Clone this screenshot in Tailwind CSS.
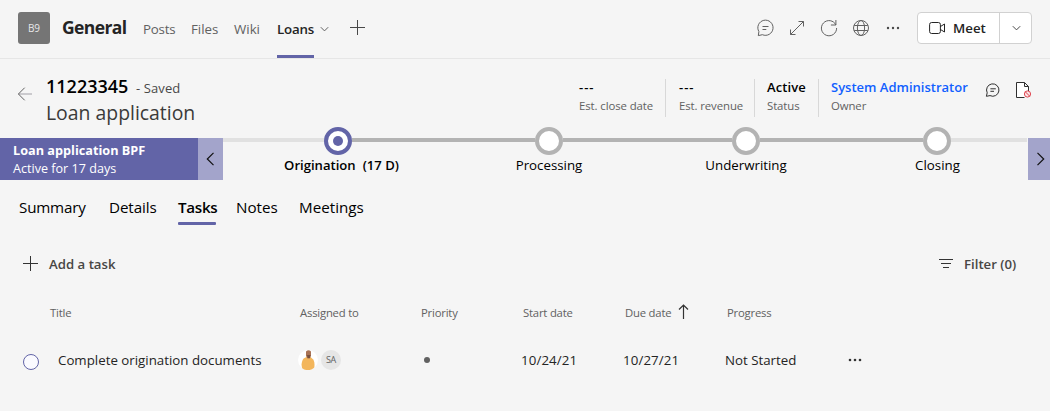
<!DOCTYPE html>
<html lang="en">
<head>
<meta charset="utf-8">
<title>General - Loans</title>
<script src="https://cdn.jsdelivr.net/npm/@tailwindcss/browser@4"></script>
</head>
<body class="w-[1050px] h-[411px] overflow-hidden bg-[#f5f5f5] font-['Open_Sans',sans-serif] text-[13.3px] leading-5 text-[#242424] whitespace-nowrap">

<!-- Channel header -->
<header class="flex h-[59px] border-b border-[#e6e6e6] pl-[18px] pr-[18px] text-[#616161]">
  <div class="mt-3 size-8 shrink-0 rounded-[3px] bg-[#757575] text-center text-[10px] leading-[33px] text-[#e8e8e8]">B9</div>
  <h1 class="ml-3 mt-[17px] w-[81px] shrink-0 text-[17.5px] font-bold tracking-[-0.6px] text-[#242424]">General</h1>
  <nav class="flex pt-[19px]">
    <a class="w-12 tracking-[-0.2px]">Posts</a>
    <a class="w-[43px]">Files</a>
    <a class="w-[43px]">Wiki</a>
    <a class="h-[39px] w-[37px] border-b-[3px] border-[#6264a7] font-semibold tracking-[-0.2px] text-[#242424]">Loans</a>
    <svg class="ml-[6px] mt-[6px]" width="9" height="8" fill="none" stroke="#616161"><path d="M.8 2.2 4.5 5.9 8.2 2.2"/></svg>
    <svg class="ml-[20px]" width="16" height="16" fill="none" stroke="#484848"><path d="M8.5 1v15M1 8.5h15"/></svg>
  </nav>
  <div class="ml-auto flex">
    <div class="flex gap-4 pt-[19px]">
      <svg width="18" height="18" fill="none" stroke="#616161" stroke-linejoin="round"><path d="M1.9 12.6A7.6 7.6 0 1 1 5.4 15.7L1.3 16.6Z M5.5 7.500h6M5.5 10.500h3.800"/></svg>
      <svg class="ml-[-2px]" width="16" height="18" fill="none" stroke="#616161"><path d="M1.5 15.5 14.5 2.5M9.5 2.5h5v5M1.5 10.5v5h5"/></svg>
      <svg class="ml-[-1px]" width="18" height="18" fill="none" stroke="#616161"><path d="M15.9 6A7.6 7.6 0 1 0 16.6 9M15.9 1v5h-5"/></svg>
      <svg class="ml-[-2px]" width="18" height="18" fill="none" stroke="#616161"><circle cx="9" cy="9" r="7.5"/><ellipse cx="9" cy="9" rx="3.6" ry="7.5"/><path d="M2.2 6.5h13.6M2.2 11.5h13.6"/></svg>
      <svg width="14" height="18" fill="#484848"><circle cx="2" cy="9" r="1.2"/><circle cx="7" cy="9" r="1.2"/><circle cx="12" cy="9" r="1.2"/></svg>
    </div>
    <div class="ml-[17px] mt-3 flex h-8 w-[115px] rounded-[4px] border border-[#d1d1d1] bg-white font-semibold text-[#242424]">
      <div class="flex w-[82px] border-r border-[#d1d1d1] pl-[11px] pt-[5px]">
        <svg class="mt-px" width="17" height="18" fill="none" stroke="#242424" stroke-linejoin="round"><rect x=".6" y="3.5" width="10.8" height="11" rx="2"/><path d="M11.5 7.5 15.5 5v8l-4-2.5"/></svg>
        <span class="ml-[7px]">Meet</span>
      </div>
      <svg class="ml-3 mt-[11px]" width="9" height="8" fill="none" stroke="#484848"><path d="M.8 2.2 4.5 5.9 8.2 2.2"/></svg>
    </div>
  </div>
</header>

<!-- Record header -->
<section class="flex h-[68px]">
  <svg class="ml-[17px] mt-[27px] shrink-0" width="16" height="16" fill="none"><path d="M1.5 8H15" stroke="#a19fa6"/><path d="M7.7 1.7 1.4 8l6.3 6.3" stroke="#616161"/></svg>
  <div class="ml-[13px] w-[533px] pt-[17px]">
    <div class="flex h-5"><span class="w-[90px] text-[18px] font-semibold text-black">11223345</span><span class="pt-[2px] text-[13px] tracking-[0.1px] text-[#484848]">- Saved</span></div>
    <h2 class="mt-[7px] text-[19.4px] font-medium text-[#3b3a39]">Loan application</h2>
  </div>
  <dl class="mt-5 flex h-[38px] text-[11.4px] tracking-[-0.1px] text-[#616161]">
    <div class="w-[87px] border-r border-[#d8d8d8]"><dt class="-mt-px text-[13px] leading-[18px] font-semibold tracking-[1px] text-black">---</dt><dd>Est. close date</dd></div>
    <div class="w-[89px] border-r border-[#d8d8d8] pl-[13px]"><dt class="-mt-px text-[13px] leading-[18px] font-semibold tracking-[1px] text-black">---</dt><dd>Est. revenue</dd></div>
    <div class="w-16 border-r border-[#d8d8d8] pl-3"><dt class="-mt-px text-[13px] leading-[18px] font-semibold tracking-[0.1px] text-black">Active</dt><dd>Status</dd></div>
    <div class="w-[166px] pl-3"><dt class="-mt-px text-[13px] leading-[18px] font-semibold tracking-normal text-[#1160ff]">System Administrator</dt><dd>Owner</dd></div>
  </dl>
  <svg class="mt-[23px] shrink-0" width="16" height="16" fill="none" stroke="#303030" stroke-linejoin="round"><path d="M2.2 10.8A6.2 6.2 0 1 1 5 13.6L1.4 14.3Z M5.4 6.8h5.4M5.4 9.3h3.6"/></svg>
  <svg class="ml-[14px] mt-[22px] shrink-0" width="18" height="18" fill="none"><path d="M9.5 16.5H1.5V1.5h8l4 4v4.5M9.5 1.5v4h4" fill="#fff" stroke="#303030"/><circle cx="12.5" cy="13" r="3.1" fill="#fbe6e8" stroke="#e0454f"/><path d="m10.3 10.8 4.4 4.4" stroke="#e0454f"/></svg>
</section>

<!-- Business process flow -->
<section class="flex h-[54px]">
  <div class="mt-[11px] h-[42px] w-[198px] shrink-0 bg-[#6264a7] pl-[13px] text-white">
    <p class="h-[19px] pt-[2px] text-[12.700px] font-bold">Loan application BPF</p>
    <p class="pt-[2px] text-[12.6px]">Active for 17 days</p>
  </div>
  <div class="mt-[11px] flex h-[42px] w-[25px] shrink-0 items-center justify-center bg-[#a3a4cb]"><svg width="9" height="14" fill="none" stroke="#111" stroke-width="1.2"><path d="M7.5.8 1.3 7l6.2 6.2"/></svg></div>
  <div class="mt-[11px] h-1 w-[101px] shrink-0 bg-[#e1e1e1]"></div>
  <div class="flex w-7 shrink-0 flex-col items-center text-black">
    <div class="flex size-7 shrink-0 items-center justify-center rounded-full border-4 border-[#6264a7] bg-white"><div class="size-[10px] rounded-full bg-[#6264a7]"></div></div>
    <div class="pl-[7px] text-[13.1px] font-semibold"><span>Origination</span><span class="ml-[7px]">(17 D)</span></div>
  </div>
  <div class="mt-[11px] h-1 w-[183px] shrink-0 bg-[#b3b3b3]"></div>
  <div class="flex w-7 shrink-0 flex-col items-center text-black">
    <div class="size-7 shrink-0 rounded-full border-4 border-[#b3b3b3] bg-white"></div>
    <div>Processing</div>
  </div>
  <div class="mt-[11px] h-1 w-[169px] shrink-0 bg-[#b3b3b3]"></div>
  <div class="flex w-7 shrink-0 flex-col items-center text-black">
    <div class="size-7 shrink-0 rounded-full border-4 border-[#b3b3b3] bg-white"></div>
    <div>Underwriting</div>
  </div>
  <div class="mt-[11px] h-1 w-[163px] shrink-0 bg-[#b3b3b3]"></div>
  <div class="flex w-7 shrink-0 flex-col items-center text-black">
    <div class="size-7 shrink-0 rounded-full border-4 border-[#b3b3b3] bg-white"></div>
    <div class="pl-px">Closing</div>
  </div>
  <div class="mt-[11px] h-1 w-[76px] shrink-0 bg-[#e1e1e1]"></div>
  <div class="ml-px mt-[11px] flex h-[42px] w-[22px] shrink-0 items-center justify-center bg-[#a3a4cb] pl-[2px]"><svg width="9" height="14" fill="none" stroke="#111" stroke-width="1.2"><path d="M1.5.8 7.7 7l-6.2 6.2"/></svg></div>
</section>

<!-- Form tabs -->
<nav class="flex h-[52px] pl-[19px] pt-4 text-[15.2px] text-black">
  <a class="w-[90px] tracking-[-0.2px]">Summary</a>
  <a class="w-[69px] tracking-[-0.1px]">Details</a>
  <a class="w-[38px] font-semibold tracking-[-0.3px]">Tasks<span class="mt-[5px] block h-[3px] rounded-[1px] bg-[#6264a7]"></span></a>
  <a class="ml-5 w-[63px]">Notes</a>
  <a>Meetings</a>
</nav>

<!-- Command bar -->
<div class="flex h-[69px] pl-[22px] pt-[21px] text-[13.2px] font-semibold text-[#484644]">
  <svg class="mt-px" width="17" height="17" fill="none" stroke="#333"><path d="M8.5 1v15M1 8.5h15"/></svg>
  <span class="ml-[10px]">Add a task</span>
  <svg class="ml-auto mt-1" width="16" height="12" fill="none" stroke="#333"><path d="M1 1.5h14M3 5.5h10M5 9.5h6"/></svg>
  <span class="ml-[10px] w-[86px]">Filter (0)</span>
</div>

<!-- Task list -->
<div class="grid h-[45px] grid-cols-[250px_121px_102px_102px_102px_1fr] pl-[50px] pt-px text-[11.3px] tracking-[-0.2px] text-[#616161]">
  <span>Title</span><span>Assigned to</span><span>Priority</span><span>Start date</span>
  <span class="flex">Due date<svg class="ml-[7px] mt-px" width="11" height="15" fill="none" stroke="#333" stroke-width="1.2"><path d="M5.5 15V1M1 5.5 5.5 1 10 5.5"/></svg></span>
  <span>Progress</span>
</div>
<div class="flex pl-[23px]">
  <div class="mt-[7px] size-4 shrink-0 rounded-full border border-[#6264a7] bg-[#fafaff]"></div>
  <div class="ml-[19px] w-[240px] pt-[3px]">Complete origination documents</div>
  <div class="flex w-[125px] gap-[3px] pt-[3px]">
    <svg width="20" height="20" viewBox="0 0 20 20"><circle cx="10" cy="10" r="10" fill="#fff"/><path d="M4.2 18.2C2.8 14 4 11 5.6 8.5L8.5 7h4l3 2.8c1.3 3 1.2 6 .6 8A10 10 0 0 1 4.200 18.200Z" fill="#f3b65c"/><path d="M8 1.500Q10.500-.8 13 1.500v4L11.800 8.500H9.500L8 6Z" fill="#a97355"/><path d="M9 5h3.500l-.6 3H9.700Z" fill="#76503f"/></svg>
    <div class="size-5 rounded-full bg-[#e6e6e6] text-center text-[9px] tracking-[-0.3px] text-[#616161]">SA</div>
  </div>
  <div class="w-[98px] pt-[10px]"><div class="ml-px size-[6px] rounded-full bg-[#616161]"></div></div>
  <div class="w-[102px] pt-[3px] tracking-[0.1px]">10/24/21</div>
  <div class="w-[102px] pt-[3px] tracking-[0.1px]">10/27/21</div>
  <div class="w-[123px] pt-[3px]">Not Started</div>
  <svg class="mt-1" width="14" height="18" fill="#333"><circle cx="2" cy="9" r="1.300"/><circle cx="7" cy="9" r="1.300"/><circle cx="12" cy="9" r="1.300"/></svg>
</div>
</body>
</html>
